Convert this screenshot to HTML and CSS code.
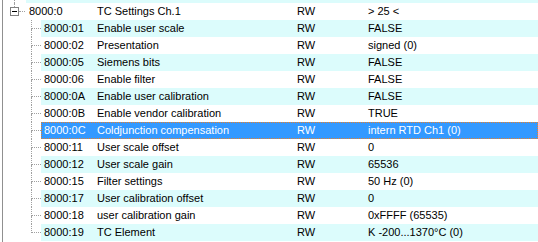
FILE: index.html
```html
<!DOCTYPE html>
<html>
	<head>
		<meta charset="UTF-8" />
		<title>TC Settings Ch.1</title>
		<link rel="stylesheet" href="styles.css">
	</head>
	<body>
<div class="tree">
  <div class="row top">
    <div class="gutter g-root"><span class="pad"></span><span class="exp"><span class="stem"></span></span></div>
    <div class="cells root-cells alt"></div>
  </div>
  <div class="row">
    <div class="gutter g-root"><span class="pad"></span><span class="exp"><span class="stem"></span><span class="box"></span></span><span class="twig"></span></div>
    <div class="cells"><span class="idx idx-root">8000:0</span><span class="name">TC Settings Ch.1</span><span class="flags">RW</span><span class="val">&gt; 25 &lt;</span></div>
  </div>
  <div class="row">
    <div class="gutter g-child"><span class="pad"></span><span class="branch"><span class="upper"></span><span class="lower"></span></span></div>
    <div class="cells alt"><span class="idx">8000:01</span><span class="name">Enable user scale</span><span class="flags">RW</span><span class="val">FALSE</span></div>
  </div>
  <div class="row">
    <div class="gutter g-child"><span class="pad"></span><span class="branch"><span class="upper"></span><span class="lower"></span></span></div>
    <div class="cells"><span class="idx">8000:02</span><span class="name">Presentation</span><span class="flags">RW</span><span class="val">signed (0)</span></div>
  </div>
  <div class="row">
    <div class="gutter g-child"><span class="pad"></span><span class="branch"><span class="upper"></span><span class="lower"></span></span></div>
    <div class="cells alt"><span class="idx">8000:05</span><span class="name">Siemens bits</span><span class="flags">RW</span><span class="val">FALSE</span></div>
  </div>
  <div class="row">
    <div class="gutter g-child"><span class="pad"></span><span class="branch"><span class="upper"></span><span class="lower"></span></span></div>
    <div class="cells"><span class="idx">8000:06</span><span class="name">Enable filter</span><span class="flags">RW</span><span class="val">FALSE</span></div>
  </div>
  <div class="row">
    <div class="gutter g-child"><span class="pad"></span><span class="branch"><span class="upper"></span><span class="lower"></span></span></div>
    <div class="cells alt"><span class="idx">8000:0A</span><span class="name">Enable user calibration</span><span class="flags">RW</span><span class="val">FALSE</span></div>
  </div>
  <div class="row">
    <div class="gutter g-child"><span class="pad"></span><span class="branch"><span class="upper"></span><span class="lower"></span></span></div>
    <div class="cells"><span class="idx">8000:0B</span><span class="name">Enable vendor calibration</span><span class="flags">RW</span><span class="val">TRUE</span></div>
  </div>
  <div class="row">
    <div class="gutter g-child"><span class="pad"></span><span class="branch"><span class="upper"></span><span class="lower"></span></span></div>
    <div class="cells sel"><span class="idx">8000:0C</span><span class="name">Coldjunction compensation</span><span class="flags">RW</span><span class="val">intern RTD Ch1 (0)</span></div>
  </div>
  <div class="row">
    <div class="gutter g-child"><span class="pad"></span><span class="branch"><span class="upper"></span><span class="lower"></span></span></div>
    <div class="cells"><span class="idx">8000:11</span><span class="name">User scale offset</span><span class="flags">RW</span><span class="val">0</span></div>
  </div>
  <div class="row">
    <div class="gutter g-child"><span class="pad"></span><span class="branch"><span class="upper"></span><span class="lower"></span></span></div>
    <div class="cells alt"><span class="idx">8000:12</span><span class="name">User scale gain</span><span class="flags">RW</span><span class="val">65536</span></div>
  </div>
  <div class="row">
    <div class="gutter g-child"><span class="pad"></span><span class="branch"><span class="upper"></span><span class="lower"></span></span></div>
    <div class="cells"><span class="idx">8000:15</span><span class="name">Filter settings</span><span class="flags">RW</span><span class="val">50 Hz (0)</span></div>
  </div>
  <div class="row">
    <div class="gutter g-child"><span class="pad"></span><span class="branch"><span class="upper"></span><span class="lower"></span></span></div>
    <div class="cells alt"><span class="idx">8000:17</span><span class="name">User calibration offset</span><span class="flags">RW</span><span class="val">0</span></div>
  </div>
  <div class="row">
    <div class="gutter g-child"><span class="pad"></span><span class="branch"><span class="upper"></span><span class="lower"></span></span></div>
    <div class="cells"><span class="idx">8000:18</span><span class="name">user calibration gain</span><span class="flags">RW</span><span class="val">0xFFFF (65535)</span></div>
  </div>
  <div class="row last">
    <div class="gutter g-child"><span class="pad"></span><span class="branch"><span class="upper"></span><span class="lower"></span></span></div>
    <div class="cells alt"><span class="idx">8000:19</span><span class="name">TC Element</span><span class="flags">RW</span><span class="val">K -200...1370°C (0)</span></div>
  </div>
</div>
	</body>
</html>
```

FILE: styles.css
```css
body {
	margin: 0;
	background-color: #fff;
	font-family: "Liberation Sans", Arial, sans-serif;
	font-size: 11px;
	color: #000;
}

.tree {
	margin-left: 2px;
	border-left: 1px solid #909090;
	height: 242px;
	overflow: hidden;
}

.row {
	display: flex;
	height: 17px;
	line-height: 17px;
}

.row.top {
	height: 3px;
}

/* tree connector lines */
.gutter {
	display: flex;
	flex: none;
}

.g-root {
	width: 23px;
}

.g-root .pad {
	width: 7px;
}

.exp {
	width: 9px;
	display: flex;
	flex-direction: column;
}

.stem {
	width: 0;
	height: 4px;
	margin-left: 4px;
	border-left: 1px dotted #a0a0a0;
}

.row.top .stem {
	height: 3px;
}

.box {
	width: 9px;
	height: 9px;
	box-sizing: border-box;
	border: 1px solid #808080;
	background-color: #fff;
	display: flex;
	align-items: center;
	justify-content: center;
}

.box::before {
	content: "";
	width: 5px;
	height: 1px;
	background-color: #000;
}

.twig {
	width: 6px;
	height: 0;
	margin-top: 8px;
	border-top: 1px dotted #a0a0a0;
}

.g-child {
	width: 38px;
}

.g-child .pad {
	width: 28px;
}

.branch {
	width: 10px;
	display: flex;
	flex-direction: column;
}

.upper {
	box-sizing: border-box;
	height: 9px;
	border-left: 1px dotted #a0a0a0;
	border-bottom: 1px dotted #a0a0a0;
}

.lower {
	flex: 1;
	border-left: 1px dotted #a0a0a0;
}

.last .lower {
	border-left: none;
}

/* columns */
.cells {
	flex: 1;
	display: flex;
	white-space: nowrap;
}

.cells.alt {
	background-color: #dcfcfc;
}

.cells.sel {
	background-color: #3399ff;
	color: #fff;
	outline: 1px dotted #e8802a;
	outline-offset: -1px;
}

.idx {
	width: 56px;
	padding-left: 3px;
	box-sizing: border-box;
	flex: none;
}

.idx-root {
	width: 71px;
}

.name {
	width: 200px;
	flex: none;
}

.flags {
	width: 71px;
	flex: none;
}

.val {
	flex: 1;
}
```
